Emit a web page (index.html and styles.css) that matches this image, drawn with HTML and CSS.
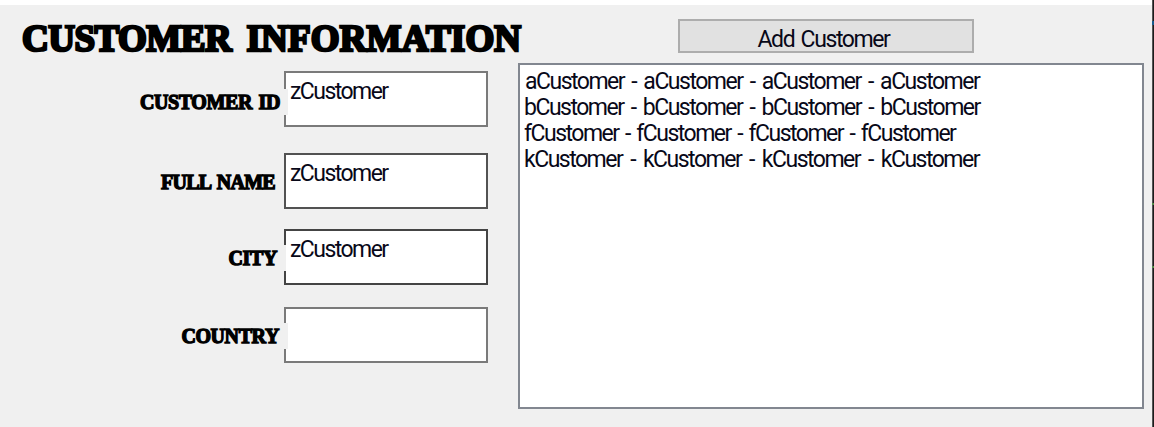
FILE: index.html
```html
<!DOCTYPE html>
<html lang="en">
<head>
<meta charset="utf-8">
<title>Customer Information</title>
<link rel="stylesheet" href="styles.css">
</head>
<body>
<div class="window">
  <main class="form">
    <section class="details">
      <h1 class="title"><span class="title-first">CUSTOMER</span> <span class="title-second">INFORMATION</span></h1>
      <div class="row row-id"><label class="label"><span>CUSTOMER ID</span></label><div class="field">zCustomer</div></div>
      <div class="row row-name"><label class="label"><span>FULL NAME</span></label><div class="field">zCustomer</div></div>
      <div class="row row-city"><label class="label"><span>CITY</span></label><div class="field">zCustomer</div></div>
      <div class="row row-country"><label class="label"><span>COUNTRY</span></label><div class="field"></div></div>
    </section>
    <section class="customers">
      <button class="add" type="button">Add Customer</button>
      <ul class="list">
        <li class="item-a">aCustomer - aCustomer - aCustomer - aCustomer</li>
        <li>bCustomer - bCustomer - bCustomer - bCustomer</li>
        <li class="item-f">fCustomer - fCustomer - fCustomer - fCustomer</li>
        <li class="item-k">kCustomer - kCustomer - kCustomer - kCustomer</li>
      </ul>
    </section>
  </main>
  <div class="edge"><i class="tick tick-blue"></i><i class="tick tick-green"></i><i class="tick tick-green-low"></i></div>
</div>
</body>
</html>
```
FILE: styles.css
```css
* { box-sizing: border-box; }
body { margin: 0; background: #fff; font-family: Roboto, "Liberation Sans", sans-serif; font-size: 23px; color: #080818; overflow: hidden; }
.window { display: flex; height: 427px; }
.form { display: flex; width: 1152px; margin-top: 5px; background: #f0f0f0; }
.details { width: 518px; }
.title { margin: 0; height: 66px; padding: 12px 0 0 22px; font: bold 37px/44px "Liberation Serif", serif; color: #000; white-space: nowrap; word-spacing: 6px; -webkit-text-stroke: 2.6px #000; }
.title-first { letter-spacing: -0.5px; }
.title-second { letter-spacing: 0.2px; }
.row { display: flex; height: 56px; }
.row-id { margin-bottom: 26px; }
.row-name { margin-bottom: 20px; }
.row-city { margin-bottom: 22px; }
.label { position: relative; z-index: 1; width: 284px; height: 26px; margin-top: 16px; padding-right: 9px; display: flex; justify-content: flex-end; background: #f0f0f0; font: bold 20px/26px "Liberation Serif", serif; letter-spacing: -0.4px; word-spacing: 2px; color: #000; white-space: nowrap; -webkit-text-stroke: 1.3px #000; }
.row-id .label, .row-country .label { width: 288px; margin-right: -4px; }
.row-id .label { margin-top: 18px; padding-right: 8px; }
.row-name .label { letter-spacing: -0.7px; }
.row-city .label { width: 286px; margin-right: -2px; }
.field { width: 204px; height: 56px; padding: 6px 4px; border: 2px solid #7a7a7a; background: #fff; line-height: 26px; letter-spacing: -1.55px; }
.row-name .field { border-color: #525252; }
.row-city .field { border-color: #444; }
.customers { width: 626px; }
.add { display: block; width: 296px; height: 34px; margin: 14px 0 10px 160px; padding: 6px 5px 0 0; border: 2px solid #adadad; background: #e1e1e1; font: inherit; line-height: 26px; letter-spacing: -1.4px; word-spacing: 2px; color: inherit; }
.list { width: 626px; height: 346px; margin: 0; padding: 4px 4px; border: 2px solid #828790; background: #fff; list-style: none; line-height: 26px; letter-spacing: -1.5px; word-spacing: 3px; white-space: nowrap; }
.item-a { padding-left: 1px; }
.item-f { word-spacing: 2.2px; }
.item-k { word-spacing: 3.7px; }
.edge { position: relative; width: 2px; background: linear-gradient(90deg, #555 50%, #1c1c1c 50%); }
.tick { position: absolute; left: 0; width: 2px; }
.tick-blue { top: 21px; height: 4px; background: #175a8c; }
.tick-green { top: 203px; height: 2px; background: #508a48; }
.tick-green-low { top: 266px; height: 2px; background: #508a48; }
```
